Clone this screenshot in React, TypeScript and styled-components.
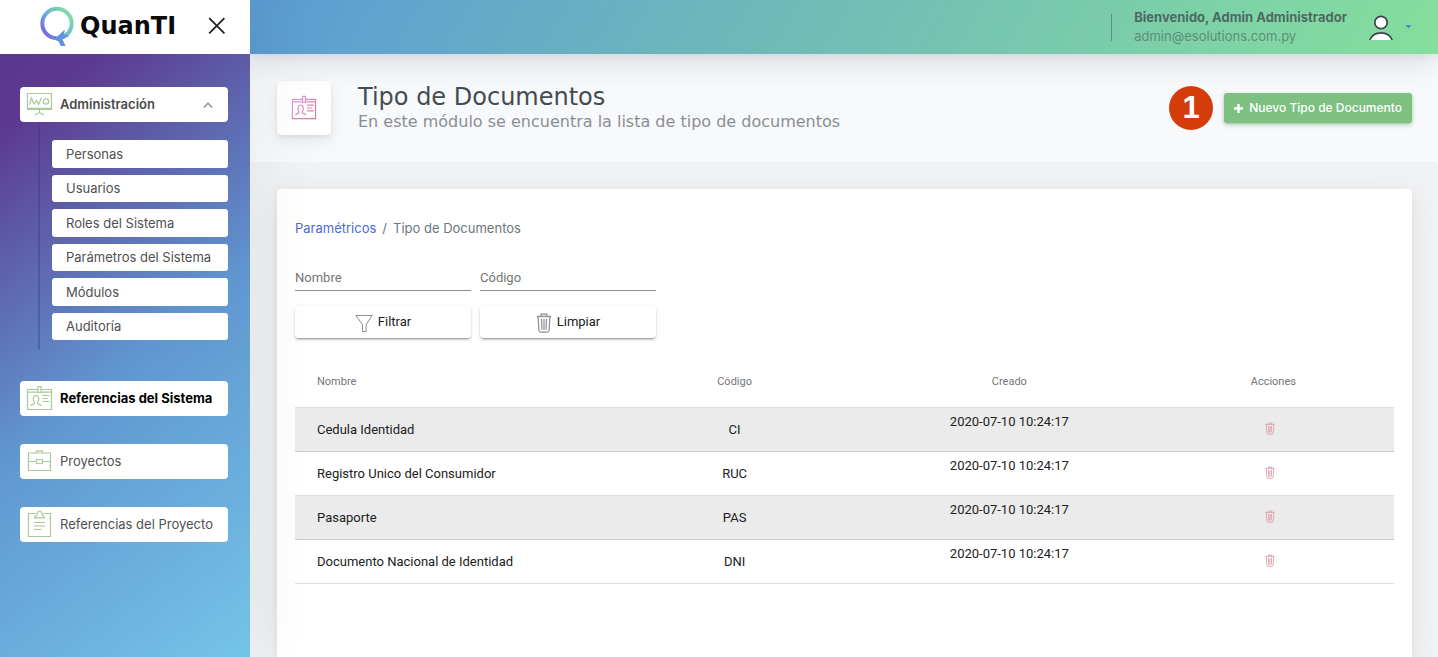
import React from 'react';
import styled, { createGlobalStyle, css } from 'styled-components';

const ui = "Inter, 'Liberation Sans', sans-serif";
const material = "Roboto, 'Liberation Sans', sans-serif";
const display = "'DejaVu Sans', sans-serif";

const GlobalStyle = createGlobalStyle`
  *, *::before, *::after { box-sizing: border-box; }
  html, body, #root { min-height: 100%; }
  body {
    margin: 0;
    background: #f1f2f4;
    color: #495057;
    font-family: ${ui};
    font-size: 13px;
    line-height: 20px;
  }
  button, input { font: inherit; }
`;

const Shell = styled.div`
  display: grid;
  grid-template-columns: 250px 1fr;
  min-height: 100vh;
`;

const Sidebar = styled.aside`
  display: flex;
  flex-direction: column;
  position: relative;
  z-index: 2;
  box-shadow: 7px 0 60px rgba(8, 10, 20, 0.06);
`;

const Brand = styled.div`
  display: flex;
  align-items: center;
  justify-content: space-between;
  height: 54px;
  padding: 0 24px 2px 38px;
  background: #fff;
`;

const Logo = styled.a`
  display: flex;
  align-items: center;
  gap: 5px;
  color: #0a0a0a;
  font: 700 24px/32px ${display};
  text-decoration: none;
`;

const IconButton = styled.button`
  display: flex;
  align-items: center;
  justify-content: center;
  padding: 0;
  border: 0;
  background: none;
  cursor: pointer;
`;

const Nav = styled.nav`
  flex: 1;
  display: flex;
  flex-direction: column;
  gap: 28px;
  padding: 33px 22px 28px 20px;
  background: linear-gradient(142deg, #5c378f 0%, #5c388f 9%, #6096cf 51%, #74c4e8 100%);
`;

const NavLink = styled.a<{ $tone?: 'open' | 'active' }>`
  display: flex;
  align-items: center;
  gap: 7px;
  height: 35px;
  padding: 0 14px 0 6px;
  border-radius: 4px;
  background: #fff;
  color: #4f4f4f;
  text-decoration: none;
  white-space: nowrap;
  ${(p) => p.$tone === 'open' && css`color: #4a4a4a; font-weight: 600;`}
  ${(p) => p.$tone === 'active' && css`color: #000; font-weight: 700;`}
`;

const NavLabel = styled.span`
  flex: 1;
  padding-bottom: 1px;
`;

const Group = styled.div`
  position: relative;
  padding-bottom: 13px;
  &::before {
    content: '';
    position: absolute;
    top: 35px;
    bottom: 3px;
    left: 18px;
    width: 2px;
    background: rgba(60, 50, 120, 0.35);
  }
`;

const SubList = styled.ul`
  display: grid;
  grid-auto-rows: 1fr;
  gap: 7px;
  height: 200px;
  margin: 18px 0 0 32px;
  padding: 0;
  list-style: none;
`;

const SubLink = styled.a`
  display: flex;
  align-items: center;
  height: 100%;
  padding: 0 14px;
  border-radius: 3px;
  background: #fff;
  color: #4f4f4f;
  text-decoration: none;
`;

const Page = styled.div`
  display: flex;
  flex-direction: column;
  min-width: 0;
`;

const TopBar = styled.header`
  display: flex;
  align-items: center;
  justify-content: flex-end;
  gap: 22px;
  height: 54px;
  padding: 0 26px;
  position: relative;
  z-index: 1;
  background: linear-gradient(120deg, #5a9ad0 0%, #5fa3cf 10%, #6cb6bc 38%, #85df9c 100%);
  box-shadow: 0 6px 33px rgba(8, 10, 40, 0.14), 0 2px 8px rgba(8, 10, 30, 0.05);
`;

const Account = styled.div`
  padding-left: 22px;
  border-left: 1px solid rgba(60, 90, 90, 0.5);
  height: 27px;
  display: flex;
  flex-direction: column;
  justify-content: center;
`;

const AccountName = styled.strong`
  color: rgba(60, 68, 72, 0.75);
  font-weight: 700;
  line-height: 19px;
`;

const AccountMail = styled.span`
  color: rgba(60, 68, 72, 0.5);
  line-height: 19px;
`;

const UserMenu = styled(IconButton)`
  gap: 12px;
`;

const TitleBand = styled.section`
  display: flex;
  align-items: center;
  gap: 27px;
  height: 108px;
  padding: 0 26px 0 27px;
  background: #f8f9fb;
`;

const TitleIcon = styled.div`
  display: flex;
  align-items: center;
  justify-content: center;
  width: 54px;
  height: 54px;
  border-radius: 4px;
  background: #fff;
  box-shadow: 0 7px 33px rgba(8, 10, 20, 0.04), 0 6px 12px rgba(8, 10, 20, 0.05), 0 2px 4px rgba(8, 10, 20, 0.06);
`;

const Titles = styled.div`
  flex: 1;
  font-family: ${display};
`;

const Title = styled.h1`
  margin: 0;
  color: #454b52;
  font-size: 24px;
  font-weight: 400;
  line-height: 28px;
`;

const Subtitle = styled.p`
  margin: 0;
  color: #8a8e93;
  font-size: 16px;
  line-height: 22px;
`;

const Actions = styled.div`
  display: flex;
  align-items: center;
  gap: 11px;
`;

const Step = styled.span`
  display: flex;
  align-items: center;
  justify-content: center;
  width: 44px;
  height: 44px;
  border-radius: 50%;
  background: #d43c0c;
  color: #fff;
  font: 700 31px/44px 'Liberation Sans', sans-serif;
`;

const PrimaryButton = styled.button`
  display: flex;
  align-items: center;
  justify-content: center;
  gap: 6px;
  height: 30px;
  padding: 0 10px;
  border: 0;
  border-radius: 3px;
  background: #7dc082;
  color: #fff;
  font-size: 12px;
  font-weight: 500;
  white-space: nowrap;
  box-shadow: 0 2px 5px rgba(125, 192, 130, 0.5), 0 1px 2px rgba(60, 140, 80, 0.3);
  cursor: pointer;
`;

const Card = styled.main`
  flex: 1;
  margin: 27px 26px 0 27px;
  padding: 29px 18px;
  border-radius: 4px 4px 0 0;
  background: #fff;
  box-shadow: 0 6px 33px rgba(8, 10, 30, 0.07), 0 2px 6px rgba(8, 10, 30, 0.06);
`;

const Crumbs = styled.nav`
  display: flex;
  gap: 6px;
  color: #6c757d;
  a { color: #4a6bd6; text-decoration: none; }
`;

const Filters = styled.form`
  display: grid;
  grid-template-columns: 176px 176px;
  gap: 15px 9px;
  margin-top: 27px;
  font-family: ${material};
`;

const Field = styled.input`
  width: 100%;
  height: 26px;
  padding: 0 0 1px;
  border: 0;
  border-bottom: 1px solid #8c8c8c;
  border-radius: 0;
  background: none;
  color: #222;
  outline: none;
  &::placeholder { color: #757575; opacity: 1; }
`;

const FlatButton = styled.button`
  display: flex;
  align-items: center;
  justify-content: center;
  gap: 5px;
  height: 32px;
  padding: 0;
  border: 0;
  border-radius: 4px;
  background: #fff;
  color: #212121;
  box-shadow: 0 3px 1px -2px rgba(0, 0, 0, 0.2), 0 2px 2px rgba(0, 0, 0, 0.14), 0 1px 4px rgba(0, 0, 0, 0.12);
  cursor: pointer;
  svg { position: relative; top: 1px; }
`;

const Table = styled.table`
  width: 100%;
  margin-top: 18px;
  border-collapse: separate;
  border-spacing: 0;
  table-layout: fixed;
  color: #212121;
  font-family: ${material};
`;

const HeadCell = styled.th<{ $width: string; $indent?: number }>`
  width: ${(p) => p.$width};
  height: 52px;
  padding: 0 0 0 ${(p) => p.$indent ?? 0}px;
  border-bottom: 1px solid #dedede;
  color: #757575;
  font-size: 11px;
  font-weight: 400;
  text-align: center;
  &:first-child { text-align: left; }
`;

const Row = styled.tr`
  &:nth-child(odd) td { background: #ebebeb; border-bottom-color: #cbcbcb; }
`;

const Cell = styled.td<{ $lift?: number }>`
  height: 44px;
  padding: 0 0 ${(p) => p.$lift ?? 0}px;
  border-bottom: 1px solid #dedede;
  text-align: center;
  vertical-align: middle;
  &:first-child { padding-left: 22px; text-align: left; }
`;

const DeleteButton = styled(IconButton)`
  margin: 0 auto;
`;

const QMark = () => (
  <svg width="37" height="42" viewBox="0 0 37 42" fill="none" aria-hidden="true">
    <defs>
      <linearGradient id="q" x1="6" y1="30" x2="32" y2="8" gradientUnits="userSpaceOnUse">
        <stop stopColor="#7a62de" />
        <stop offset=".45" stopColor="#66b0de" />
        <stop offset="1" stopColor="#84dfa0" />
      </linearGradient>
    </defs>
    <circle cx="19" cy="18.5" r="14.7" stroke="url(#q)" strokeWidth="4" />
    <path d="M26.8 24.5L26 30.2L31.8 30.4L24.4 34.6L27.6 41H22.8L20.6 36.6L16.5 34.2Z" fill="#5f93e0" />
  </svg>
);

const CloseIcon = () => (
  <svg width="18" height="18" viewBox="0 0 18 18" fill="none" stroke="#222" strokeWidth="1.8" aria-hidden="true">
    <path d="M1.2 1.2L16.4 16.4M16.4 1.2L1.2 16.4" />
  </svg>
);

const green = '#a9c999';

const BoardIcon = () => (
  <svg width="27" height="27" viewBox="0 0 27 27" fill="none" stroke={green} strokeWidth="1.2" aria-hidden="true">
    <path d="M1.5 2.5H25.5V18.5H1.5ZM1.5 17.4H25.5" />
    <path d="M3.5 13.5L5.5 7L8 13L10.5 9.5L12.5 13.5L15.5 6.5" />
    <circle cx="20" cy="10.5" r="2.7" />
    <path d="M13.5 19V21.4M9 24L13.5 21.4L18 24" />
  </svg>
);

const IdIcon = ({ size, stroke }: { size: number; stroke: string }) => (
  <svg width={size} height={size} viewBox="0 0 27 27" fill="none" stroke={stroke} strokeWidth="1.2" aria-hidden="true">
    <defs>
      <linearGradient id="rose" x1="2" y1="3" x2="25" y2="25" gradientUnits="userSpaceOnUse">
        <stop stopColor="#d9a0e6" />
        <stop offset="1" stopColor="#e2728f" />
      </linearGradient>
    </defs>
    <path d="M12 4.5H1.5V24.5H25.5V4.5H15M1.5 7.2H12M15 7.2H25.5" />
    <path d="M12 1.5H15V7.5H12Z" />
    <path d="M4.5 20.8Q5 19.4 8 18.8Q8.8 18 8 16.6C6.6 14 7 10.4 10 10.4C13 10.4 13.4 14 12 16.6Q11.2 18 12 18.8Q15 19.4 15.5 20.8" />
    <path d="M16.5 10.5H23.5M16.5 13.5H21.5M16.5 16.5H23.5" />
  </svg>
);

const CaseIcon = () => (
  <svg width="27" height="27" viewBox="0 0 27 27" fill="none" stroke={green} strokeWidth="1.2" aria-hidden="true">
    <path d="M2.5 5H24.5V22.5H2.5ZM10.5 5V2.8H16.5V5M2.5 13.5H10.5M16.5 13.5H24.5M10.5 11.5H16.5V15.5H10.5Z" />
  </svg>
);

const ClipboardIcon = () => (
  <svg width="27" height="29" viewBox="0 0 27 29" fill="none" stroke={green} strokeWidth="1.2" aria-hidden="true">
    <path d="M10 3.5H2.5V26.5H24.5V3.5H17" />
    <path d="M8.5 7.8C8.8 5.8 11 6 11.2 3.7C11.2 .4 15.8 .4 15.8 3.7C16 6 18.2 5.8 18.5 7.8Z" />
    <path d="M8 12.5H19M8 16H19M8 19.5H15.5" />
  </svg>
);

const ChevronUp = () => (
  <svg width="12" height="12" viewBox="0 0 12 12" fill="none" stroke="#8c8c8c" strokeWidth="1.3" aria-hidden="true">
    <path d="M1.8 8.5L6 4.2L10.2 8.5" />
  </svg>
);

const UserIcon = () => (
  <svg width="24" height="28" viewBox="0 0 24 28" fill="#fff" stroke="#3f4550" strokeWidth="1.7" aria-hidden="true">
    <circle cx="12" cy="9.5" r="6.2" />
    <path d="M0.8 27C4.5 17.5 19.5 17.5 23.2 27" />
  </svg>
);

const Caret = () => (
  <svg width="7" height="4" viewBox="0 0 8 4" aria-hidden="true">
    <path d="M.5 0H7.5L4 3.5Z" fill="#4a78d8" />
  </svg>
);

const PlusIcon = () => (
  <svg width="9" height="9" viewBox="0 0 9 9" stroke="#fff" strokeWidth="2.4" aria-hidden="true">
    <path d="M4.5 0V9M0 4.5H9" />
  </svg>
);

const FunnelIcon = () => (
  <svg width="18" height="20" viewBox="1 0 18 20" fill="none" stroke="#8a8f95" aria-hidden="true">
    <path d="M1.8 2.5H18.2L12.2 11.5V18.5H8.5V11.5Z" />
  </svg>
);

const TrashIcon = ({ width, height, color, weight = 1.2 }: { width: number; height: number; color: string; weight?: number }) => (
  <svg width={width} height={height} viewBox="0 0 16 20" fill="none" stroke={color} strokeWidth={weight} aria-hidden="true">
    <path d="M1 3.5H15M2 4L3 17.5Q3.2 19.2 5 19.2H11Q12.8 19.2 13 17.5L14 4M5 3V1.2H11V3" />
    <path d="M5.5 6L6 16.8M8 6V16.8M10.5 6L10 16.8" />
    <path d="M1 2.2H15V4.5H1Z" fill={color} fillOpacity=".25" stroke="none" />
  </svg>
);

const modules = ['Personas', 'Usuarios', 'Roles del Sistema', 'Parámetros del Sistema', 'Módulos', 'Auditoría'];

const documents = [
  { name: 'Cedula Identidad', code: 'CI', created: '2020-07-10 10:24:17' },
  { name: 'Registro Unico del Consumidor', code: 'RUC', created: '2020-07-10 10:24:17' },
  { name: 'Pasaporte', code: 'PAS', created: '2020-07-10 10:24:17' },
  { name: 'Documento Nacional de Identidad', code: 'DNI', created: '2020-07-10 10:24:17' },
];

export default function App() {
  return (
    <>
      <GlobalStyle />
      <Shell>
        <Sidebar>
          <Brand>
            <Logo href="#"><QMark />QuanTI</Logo>
            <IconButton type="button" aria-label="Cerrar menú"><CloseIcon /></IconButton>
          </Brand>
          <Nav>
            <Group>
              <NavLink href="#" $tone="open"><BoardIcon /><NavLabel>Administración</NavLabel><ChevronUp /></NavLink>
              <SubList>
                {modules.map((m) => (
                  <li key={m}><SubLink href="#">{m}</SubLink></li>
                ))}
              </SubList>
            </Group>
            <NavLink href="#" $tone="active"><IdIcon size={27} stroke={green} /><NavLabel>Referencias del Sistema</NavLabel></NavLink>
            <NavLink href="#"><CaseIcon /><NavLabel>Proyectos</NavLabel></NavLink>
            <NavLink href="#"><ClipboardIcon /><NavLabel>Referencias del Proyecto</NavLabel></NavLink>
          </Nav>
        </Sidebar>
        <Page>
          <TopBar>
            <Account>
              <AccountName>Bienvenido, Admin Administrador</AccountName>
              <AccountMail>admin@esolutions.com.py</AccountMail>
            </Account>
            <UserMenu type="button" aria-label="Cuenta"><UserIcon /><Caret /></UserMenu>
          </TopBar>
          <TitleBand>
            <TitleIcon><IdIcon size={26} stroke="url(#rose)" /></TitleIcon>
            <Titles>
              <Title>Tipo de Documentos</Title>
              <Subtitle>En este módulo se encuentra la lista de tipo de documentos</Subtitle>
            </Titles>
            <Actions>
              <Step>1</Step>
              <PrimaryButton type="button"><PlusIcon />Nuevo Tipo de Documento</PrimaryButton>
            </Actions>
          </TitleBand>
          <Card>
            <Crumbs aria-label="Ruta">
              <a href="#">Paramétricos</a><span>/</span><span>Tipo de Documentos</span>
            </Crumbs>
            <Filters>
              <Field aria-label="Nombre" placeholder="Nombre" />
              <Field aria-label="Código" placeholder="Código" />
              <FlatButton type="button"><FunnelIcon />Filtrar</FlatButton>
              <FlatButton type="button"><TrashIcon width={16} height={20} color="#8a8f95" />Limpiar</FlatButton>
            </Filters>
            <Table>
              <thead>
                <tr>
                  <HeadCell scope="col" $width="27.5%" $indent={22}>Nombre</HeadCell>
                  <HeadCell scope="col" $width="25%">Código</HeadCell>
                  <HeadCell scope="col" $width="25%">Creado</HeadCell>
                  <HeadCell scope="col" $width="22.5%" $indent={6}>Acciones</HeadCell>
                </tr>
              </thead>
              <tbody>
                {documents.map((d) => (
                  <Row key={d.code}>
                    <Cell>{d.name}</Cell>
                    <Cell>{d.code}</Cell>
                    <Cell $lift={15}>{d.created}</Cell>
                    <Cell $lift={3}>
                      <DeleteButton type="button" aria-label={`Eliminar ${d.name}`}>
                        <TrashIcon width={10} height={13} color="#dfa3ae" weight={1.5} />
                      </DeleteButton>
                    </Cell>
                  </Row>
                ))}
              </tbody>
            </Table>
          </Card>
        </Page>
      </Shell>
    </>
  );
}
